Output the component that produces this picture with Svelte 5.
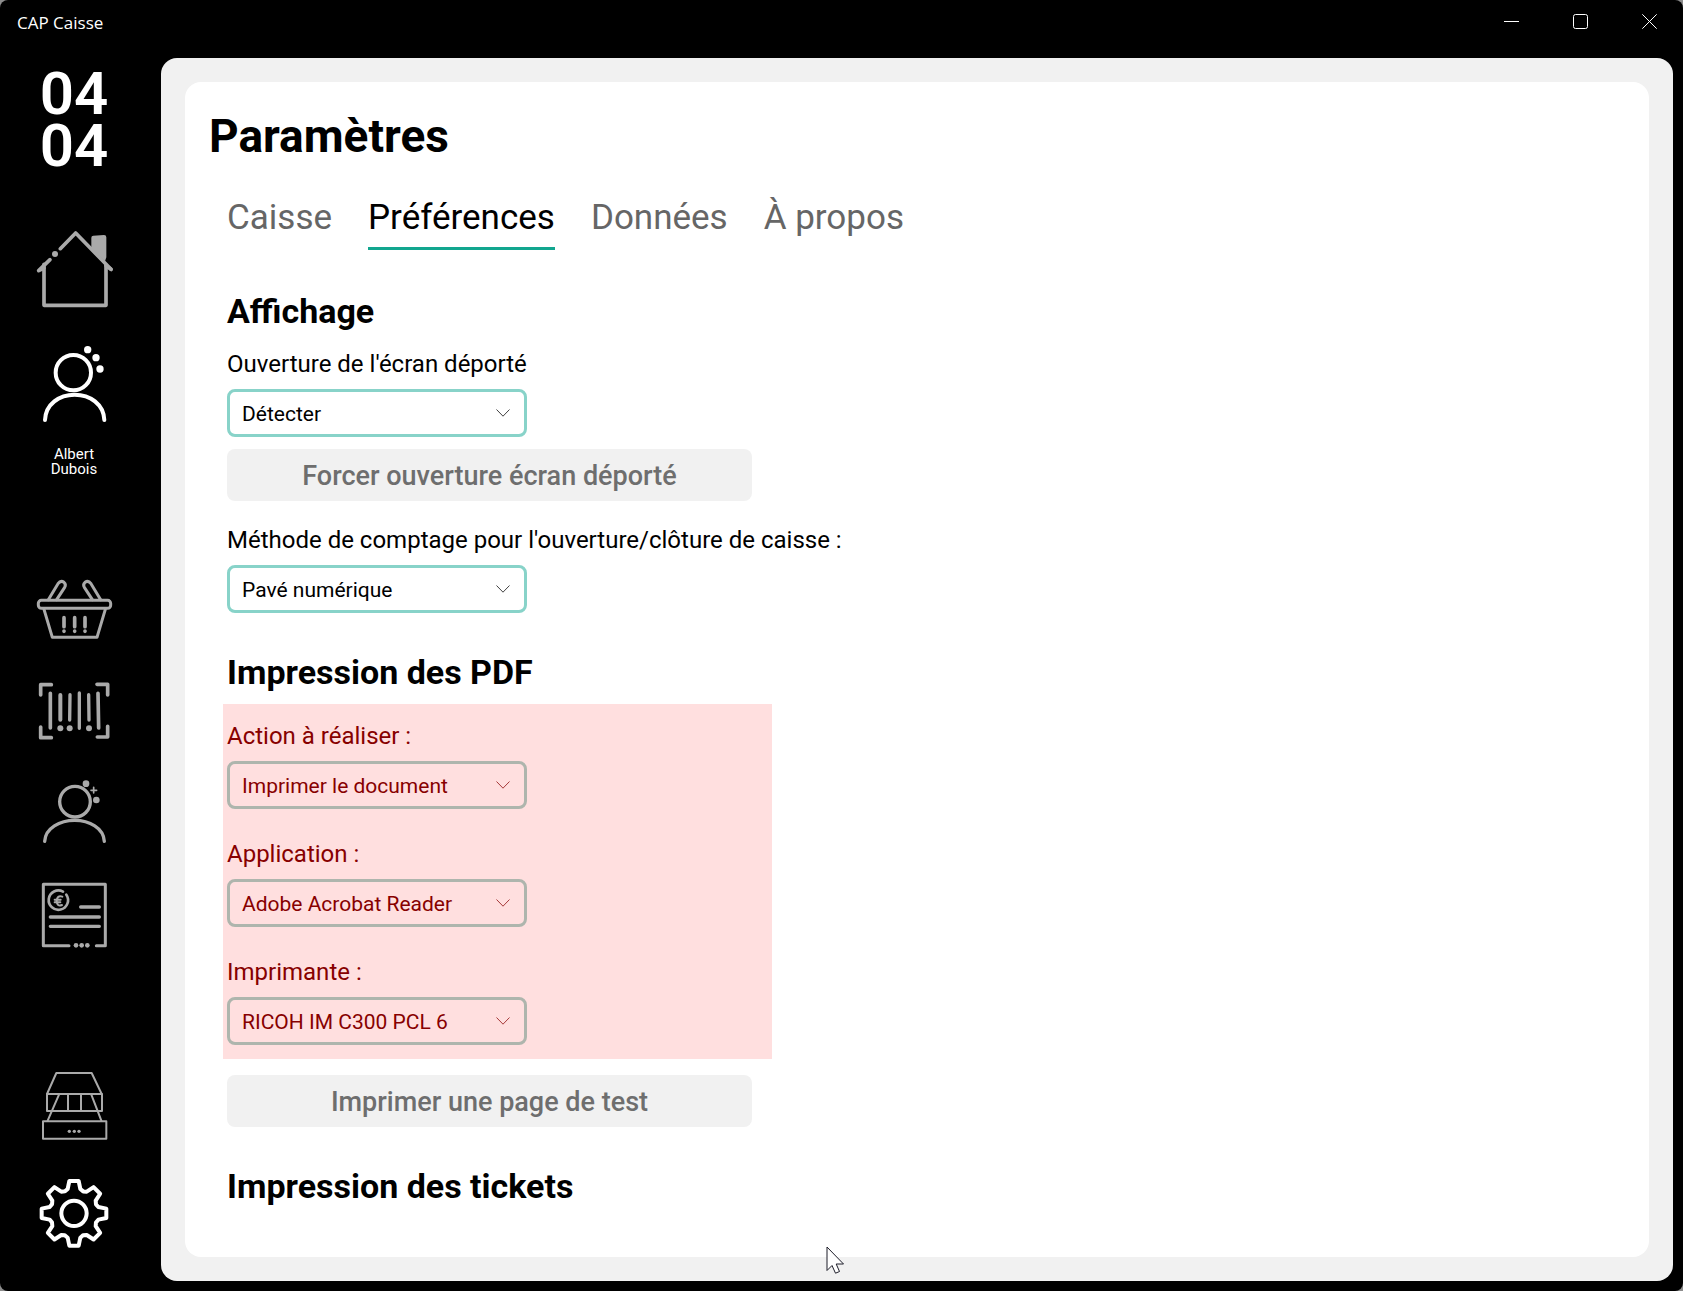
<script>
  const tabs = ['Caisse', 'Préférences', 'Données', 'À propos'];
  let active = $state('Préférences');

  const printing = [
    { id: 'action', label: 'Action à réaliser :', value: 'Imprimer le document' },
    { id: 'application', label: 'Application :', value: 'Adobe Acrobat Reader' },
    { id: 'printer', label: 'Imprimante :', value: 'RICOH IM C300 PCL 6' }
  ];

  // Eight-toothed gear outline, one tooth every 45 degrees.
  const tooth = [[-27, 66], [-19, 73], [-14, 97], [14, 97], [19, 73]];
  const gear = Array.from({ length: 8 }, (_, k) => {
    const a = (k * Math.PI) / 4;
    return tooth
      .map(([x, y]) => {
        const px = 222 + x * Math.cos(a) + y * Math.sin(a);
        const py = 490 + x * Math.sin(a) - y * Math.cos(a);
        return `${px.toFixed(1)},${py.toFixed(1)}`;
      })
      .join(' ');
  }).join(' ');
</script>

{#snippet field(id, label, value)}
  <div class="field">
    <label for={id}>{label}</label>
    <div class="combo">
      <select {id}><option>{value}</option></select>
      <svg class="chevron" width="14" height="8" viewBox="0 0 14 8" aria-hidden="true">
        <path d="M0.5 0.5 7 7.2 13.5 0.5" />
      </svg>
    </div>
  </div>
{/snippet}

<div class="window">
  <header class="titlebar">
    <span class="app-name">CAP Caisse</span>
    <div class="controls">
      <button aria-label="Réduire">
        <svg width="15" height="15" viewBox="0 0 15 15"><path d="M0 7.5H15" /></svg>
      </button>
      <button aria-label="Agrandir">
        <svg width="15" height="15" viewBox="0 0 15 15"><rect x="0.5" y="0.5" width="14" height="14" rx="2" /></svg>
      </button>
      <button aria-label="Fermer">
        <svg width="15" height="15" viewBox="0 0 15 15"><path d="M0.3 0.3 14.7 14.7M14.7 0.3 0.3 14.7" /></svg>
      </button>
    </div>
  </header>

  <div class="body">
    <nav class="sidebar" aria-label="Menu principal">
      <div class="date">04<br />04</div>

      <button class="home" aria-label="Accueil">
        <svg width="80" height="84" viewBox="102 678 240 252">
          <g stroke-width="11">
            <path d="M132 793V916H318V795" />
            <path d="M181 746 227 699 333 808" />
            <path d="M150 779 116 812 132 804" stroke-width="11" />
            <path d="M318 797 333 808" />
          </g>
          <path class="solid" d="M274 713q0-6 6-6l32-2q7 0 7 7v60l-4 12-41-40z" />
          <circle class="solid" cx="165" cy="762" r="9" />
        </svg>
      </button>

      <button class="user lit" aria-label="Albert Dubois">
        <svg width="80" height="84" viewBox="102 36 240 252">
          <g stroke-width="12">
            <circle cx="220" cy="128" r="53" />
            <path d="M135 270C137 222 178 194 224 194S311 222 313 270" />
          </g>
          <circle class="solid" cx="263" cy="59" r="11" />
          <circle class="solid" cx="288" cy="83" r="11" />
          <circle class="solid" cx="300" cy="117" r="11" />
        </svg>
        <span>Albert</span>
        <span>Dubois</span>
      </button>

      <button class="basket" aria-label="Panier">
        <svg width="80" height="66" viewBox="102 738 240 198">
          <g stroke-width="9">
            <path d="M145 809 174 761Q182 750 192 757 199 763 194 772L170 809" />
            <path d="M302 809 273 761Q265 750 255 757 248 763 253 772L277 809" />
            <rect x="115" y="811" width="217" height="24" rx="9" />
            <path d="M132 838 157 922H291L316 838" />
          </g>
          <g stroke-width="11">
            <path d="M192 863V890M224 863V890M255 863V890" />
            <path d="M192 903v1M224 903v1M255 903v1" />
          </g>
        </svg>
      </button>

      <button class="item" aria-label="Code-barres">
        <svg width="80" height="62" viewBox="102 90 240 186">
          <g stroke-width="11">
            <path d="M122 135V104H154M291 103H323V135M122 231V263H154M292 261H323V229" />
            <path d="M151 130V234M294 130 296 234" />
            <path d="M181 135V209" stroke-width="12" />
            <path d="M210 134 209 210M238 129V235M266 134 267 210" stroke-width="10" />
          </g>
          <circle class="solid" cx="181" cy="235" r="9" />
          <circle class="solid" cx="209" cy="235" r="9" />
          <circle class="solid" cx="267" cy="235" r="9" />
        </svg>
      </button>

      <button class="item" aria-label="Clients">
        <svg width="80" height="70" viewBox="102 378 240 210">
          <g stroke-width="10">
            <circle cx="225" cy="455" r="46" />
            <path d="M134 574C136 534 180 511 224 511S311 534 313 574" />
          </g>
          <path d="M281 412V429M273 421H290" stroke-width="5" />
          <circle class="solid" cx="258" cy="401" r="10" />
          <circle class="solid" cx="289" cy="450" r="10" />
        </svg>
      </button>

      <button class="item" aria-label="Factures">
        <svg width="80" height="70" viewBox="102 690 240 210">
          <g stroke-width="9">
            <path d="M207 887H130V703H316V887H289" />
            <path d="M242 771H298M151 801H298M151 829H298" stroke-width="10" />
            <path d="M189 725A29 29 0 1 0 199 734" stroke-width="8" />
            <path d="M187 740Q171 735 170 753 171 771 186 765M164 749H182M164 757H181" stroke-width="6" />
          </g>
          <circle class="solid" cx="228" cy="886" r="7" />
          <circle class="solid" cx="245" cy="886" r="7" />
          <circle class="solid" cx="262" cy="886" r="7" />
        </svg>
      </button>

      <button class="register" aria-label="Tiroir-caisse">
        <svg width="80" height="72" viewBox="102 60 240 216">
          <g stroke-width="6">
            <path d="M141 132 169 69H275L305 132Z" />
            <path d="M141 132H306V183H141ZM204 132V183M243 132V183" />
            <path d="M177 134 143 212M274 134 304 212" />
            <rect x="129" y="214" width="190" height="52" />
          </g>
          <circle class="solid" cx="208" cy="244" r="5" />
          <circle class="solid" cx="223" cy="244" r="5" />
          <circle class="solid" cx="237" cy="244" r="5" />
        </svg>
      </button>

      <button class="item lit" aria-label="Paramètres">
        <svg width="80" height="74" viewBox="102 378 240 222">
          <g stroke-width="12">
            <polygon points={gear} />
            <circle cx="222" cy="490" r="38" />
          </g>
        </svg>
      </button>
    </nav>

    <main class="frame">
      <div class="panel">
        <h1>Paramètres</h1>

        <div class="content">
          <div class="tabs" role="tablist">
            {#each tabs as tab}
              <button role="tab" aria-selected={tab === active} class:active={tab === active} onclick={() => (active = tab)}>
                {tab}
              </button>
            {/each}
          </div>

          <section>
            <h2>Affichage</h2>
            <div class="group">
              {@render field('screen', "Ouverture de l'écran déporté", 'Détecter')}
              <button class="action">Forcer ouverture écran déporté</button>
              {@render field('counting', "Méthode de comptage pour l'ouverture/clôture de caisse :", 'Pavé numérique')}
            </div>
          </section>

          <section>
            <h2>Impression des PDF</h2>
            <div class="highlight">
              {#each printing as p}
                {@render field(p.id, p.label, p.value)}
              {/each}
            </div>
            <button class="action">Imprimer une page de test</button>
          </section>

          <section>
            <h2>Impression des tickets</h2>
          </section>
        </div>
      </div>
    </main>
  </div>

  <svg class="pointer" width="19" height="29" viewBox="0 0 19 29" aria-hidden="true">
    <path d="M1 1V24.5L6 19.5 9.5 27.2 13.5 25.5 10.2 18H17.5Z" />
  </svg>
</div>

<style>
  :global(body) {
    background: #8c8c8c;
  }

  .window {
    position: relative;
    display: flex;
    flex-direction: column;
    box-sizing: border-box;
    min-height: 100vh;
    background: #000;
    border-radius: 8px;
    color: #000;
    font-family: Roboto, 'Noto Sans', sans-serif;
  }

  button,
  select {
    margin: 0;
    padding: 0;
    border: 0;
    background: none;
    color: inherit;
    font: inherit;
  }

  svg {
    display: block;
    fill: none;
    stroke: currentColor;
    overflow: visible;
  }

  .solid {
    fill: currentColor;
    stroke: none;
  }

  .titlebar {
    display: flex;
    justify-content: space-between;
    height: 44px;
    color: #fff;
  }

  .app-name {
    padding-left: 17px;
    font: 17px/46px 'Open Sans', sans-serif;
  }

  .controls {
    display: flex;
    gap: 2px;
  }

  .controls button {
    display: grid;
    place-items: center;
    width: 67px;
    height: 43px;
  }

  .body {
    display: flex;
    flex: 1;
  }

  .sidebar {
    display: flex;
    flex-direction: column;
    align-items: center;
    flex: 0 0 148px;
    padding: 24px 0 41px;
    color: #aaa;
  }

  .sidebar svg {
    stroke-linecap: round;
    stroke-linejoin: round;
  }

  .lit {
    color: #fff;
  }

  .date {
    color: #fff;
    font-size: 60px;
    font-weight: 600;
    line-height: 52px;
  }

  .home {
    margin-top: 54px;
  }

  .user {
    display: flex;
    flex-direction: column;
    align-items: center;
    margin-top: 32px;
    font-size: 15px;
    line-height: 15px;
  }

  .user svg {
    margin-bottom: 21px;
  }

  .basket {
    margin-top: 99px;
    margin-bottom: 4px;
  }

  .item {
    margin-top: 34px;
  }

  .register {
    margin-top: auto;
  }

  .frame {
    display: flex;
    flex: 1;
    min-width: 0;
    margin: 14px 10px 10px 13px;
    padding: 24px;
    background: #f1f1f1;
    border-radius: 16px;
  }

  .panel {
    flex: 1;
    min-width: 0;
    padding: 24px;
    background: #fff;
    border-radius: 16px;
  }

  h1,
  h2 {
    margin: 0;
    font-weight: 700;
  }

  h1 {
    font-size: 46px;
    line-height: 60px;
  }

  h2 {
    font-size: 34px;
    line-height: 42px;
  }

  .content {
    padding-left: 18px;
  }

  .tabs {
    display: flex;
    gap: 36px;
    margin-top: 30px;
    color: #666;
    font-size: 35px;
    line-height: 44px;
  }

  .tabs button {
    padding-bottom: 7px;
    border-bottom: 3px solid transparent;
  }

  .tabs .active {
    border-color: #12a68f;
    color: #000;
  }

  section {
    margin-top: 38px;
  }

  .tabs + section {
    margin-top: 40px;
  }

  .group {
    padding-top: 16px;
  }

  .field {
    display: flex;
    flex-direction: column;
    gap: 9px;
    font-size: 24px;
    line-height: 32px;
  }

  .combo {
    display: grid;
    align-items: center;
    width: 300px;
    font-size: 21px;
  }

  .combo > * {
    grid-area: 1 / 1;
  }

  select {
    appearance: none;
    width: 100%;
    height: 48px;
    padding: 2px 40px 0 12px;
    border: 3px solid #88d3c9;
    border-radius: 8px;
  }

  .chevron {
    justify-self: end;
    margin-right: 17px;
    pointer-events: none;
    opacity: 0.75;
  }

  .action {
    display: block;
    width: 525px;
    max-width: 100%;
    height: 52px;
    margin-top: 12px;
    padding-top: 2px;
    background: #f1f1f1;
    border-radius: 8px;
    color: #6e6e6e;
    font-size: 27px;
    font-weight: 500;
  }

  .action + .field {
    margin-top: 23px;
  }

  .highlight {
    display: flex;
    flex-direction: column;
    gap: 29px;
    width: 545px;
    max-width: 100%;
    box-sizing: content-box;
    margin: 11px 0 0 -4px;
    padding: 16px 0 14px 4px;
    background: #ffdfdf;
    color: #870000;
  }

  .highlight select {
    border-color: #aeb5ad;
  }

  .highlight + .action {
    margin-top: 16px;
  }

  .pointer {
    position: absolute;
    left: 826px;
    top: 1246px;
    stroke: #1c1c28;
    pointer-events: none;
  }

  .pointer path {
    fill: #fff;
  }
</style>
